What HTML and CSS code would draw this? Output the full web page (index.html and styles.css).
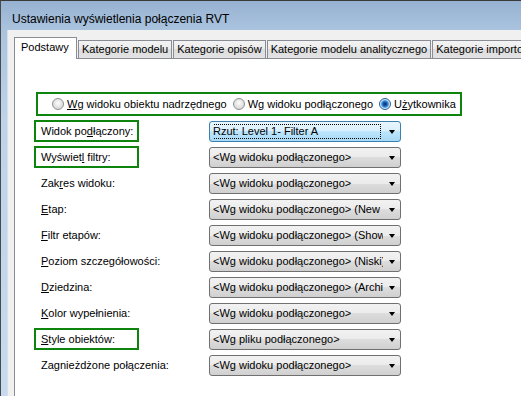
FILE: index.html
```html
<!DOCTYPE html>
<html lang="pl">
<head>
<meta charset="utf-8">
<link rel="stylesheet" href="styles.css">
</head>
<body>
<div class="window">
  <div class="titlebar">Ustawienia wyświetlenia połączenia RVT</div>
  <div class="client">
    <div class="tabs">
      <div class="tab active">Podstawy</div>
      <div class="tab">Kategorie modelu</div>
      <div class="tab">Kategorie opisów</div>
      <div class="tab">Kategorie modelu analitycznego</div>
      <div class="tab">Kategorie importow</div>
    </div>
    <div class="panel">
      <div class="radios hl">
        <label class="radio"><span class="dot"></span><span><u>W</u>g widoku obiektu nadrzędnego</span></label>
        <label class="radio"><span class="dot"></span><span>W<u>g</u> widoku podłączonego</span></label>
        <label class="radio"><span class="dot on"></span><span>U<u>ż</u>ytkownika</span></label>
      </div>
      <div class="form">
        <div class="lbl hl">Widok po<u>d</u>łączony:</div>
        <div class="combo focus"><span class="val"><span class="focusrect">Rzut: Level 1- Filter A</span></span><span class="arrow"></span></div>

        <div class="lbl hl">Wyświet<u>l</u> filtry:</div>
        <div class="combo"><span class="val">&lt;Wg widoku podłączonego&gt;</span><span class="arrow"></span></div>

        <div class="lbl">Zak<u>r</u>es widoku:</div>
        <div class="combo"><span class="val">&lt;Wg widoku podłączonego&gt;</span><span class="arrow"></span></div>

        <div class="lbl"><u>E</u>tap:</div>
        <div class="combo"><span class="val">&lt;Wg widoku podłączonego&gt; (New</span><span class="arrow"></span></div>

        <div class="lbl"><u>F</u>iltr etapów:</div>
        <div class="combo"><span class="val">&lt;Wg widoku podłączonego&gt; (Show</span><span class="arrow"></span></div>

        <div class="lbl"><u>P</u>oziom szczegółowości:</div>
        <div class="combo"><span class="val">&lt;Wg widoku podłączonego&gt; (Niski)</span><span class="arrow"></span></div>

        <div class="lbl"><u>D</u>ziedzina:</div>
        <div class="combo"><span class="val">&lt;Wg widoku podłączonego&gt; (Archi</span><span class="arrow"></span></div>

        <div class="lbl"><u>K</u>olor wypełnienia:</div>
        <div class="combo"><span class="val">&lt;Wg widoku podłączonego&gt;</span><span class="arrow"></span></div>

        <div class="lbl hl"><u>S</u>tyle obiektów:</div>
        <div class="combo"><span class="val">&lt;Wg pliku podłączonego&gt;</span><span class="arrow"></span></div>

        <div class="lbl">Za<u>g</u>nieżdżone połączenia:</div>
        <div class="combo"><span class="val">&lt;Wg widoku podłączonego&gt;</span><span class="arrow"></span></div>
      </div>
    </div>
  </div>
</div>
</body>
</html>
```
FILE: styles.css
```css
* { box-sizing: border-box; }
html, body { margin: 0; padding: 0; }
body {
  font-family: "Liberation Sans", Arial, sans-serif;
  font-size: 11px;
  color: #000;
  background: #fff;
}
.window {
  width: 521px;
  height: 396px;
  overflow: hidden;
  display: flex;
  flex-direction: column;
  border-top: 1px solid #3a3a3a;
  border-left: 1px solid #4a4a4a;
  background: linear-gradient(#97b2d1 0px, #aac4e0 30px, #bcd3ea 120px, #c6dbef 396px);
}
.titlebar {
  height: 29px;
  flex: none;
  padding: 10px 0 0 11px;
  font-size: 12px;
  line-height: 16px;
  color: #000;
}
.client {
  flex: 1;
  margin-left: 6px;
  background: #f0f0f0;
  border-left: 1px solid #dadfe6;
  padding: 7px 0 0 6px;
  display: flex;
  flex-direction: column;
  min-height: 0;
}
.tabs {
  display: flex;
  align-items: flex-end;
  gap: 1px;
  flex: none;
  white-space: nowrap;
  position: relative;
  z-index: 1;
}
.tab {
  height: 18px;
  padding: 1px 3px 0 3px;
  line-height: 15px;
  border: 1px solid #898c95;
  border-bottom: none;
  background: linear-gradient(#f3f3f3, #ebebeb 50%, #dddddd 50%, #e3e3e3);
  flex: none;
}
.tab.active {
  height: 22px;
  margin-bottom: -1px;
  padding: 2px 6px 0 6px;
  background: #fff;
  width: 63px;
}
.panel {
  flex: 1;
  background: #fff;
  border: 1px solid #898c95;
  border-right: none;
  border-bottom: none;
  padding: 33px 0 0 0;
}
.hl { border: 2px solid #0d840d; }
.radios {
  margin-left: 21px;
  width: 426px;
  height: 24px;
  display: flex;
  align-items: center;
  gap: 6px;
  padding-left: 14px;
  white-space: nowrap;
}
.radio {
  display: flex;
  align-items: center;
  gap: 3px;
}
.dot {
  width: 12px;
  height: 12px;
  border-radius: 50%;
  border: 1px solid #8d8f91;
  background: radial-gradient(circle at 50% 40%, #fdfdfd 0, #e6e6e6 45%, #cfcfcf 100%);
  display: inline-block;
  flex: none;
}
.dot.on {
  border-color: #2b5d93;
  background: radial-gradient(circle at 50% 50%, #0d2d6b 0, #1d5aa8 2px, #4fa3ea 3.5px, #cfe6f8 4.5px, #e9f3fb 100%);
}
.form {
  display: grid;
  grid-template-columns: 105px 192px;
  grid-auto-rows: 22px;
  row-gap: 4px;
  column-gap: 70px;
  margin: 4px 0 0 19px;
  align-items: center;
}
.lbl {
  height: 22px;
  border: 2px solid transparent;
  padding: 0 0 0 5px;
  line-height: 18px;
  white-space: nowrap;
}
.lbl.hl { border-color: #0d840d; }
.combo {
  height: 21px;
  border: 1px solid #707070;
  border-radius: 3px;
  background: linear-gradient(#f2f2f2, #ebebeb 50%, #dddddd 50%, #d0d0d0);
  display: flex;
  align-items: center;
  padding: 0 0 0 3px;
}
.combo.focus {
  border-color: #3c7fb1;
  background: linear-gradient(#eaf6fd, #d9f0fc 50%, #bee6fd 50%, #a7d9f5);
}
.val {
  flex: 1;
  overflow: hidden;
  white-space: nowrap;
  line-height: 15px;
}
.focusrect {
  display: block;
  width: 169px;
  border: 1px dotted #000;
  padding-left: 0;
  line-height: 13px;
  margin-left: -1px;
}
.arrow {
  flex: none;
  width: 0;
  height: 0;
  margin: 1px 5px 0 6px;
  border-left: 3.5px solid transparent;
  border-right: 3.5px solid transparent;
  border-top: 4px solid #000;
}
u { text-decoration: underline; text-underline-offset: 1px; }
```
